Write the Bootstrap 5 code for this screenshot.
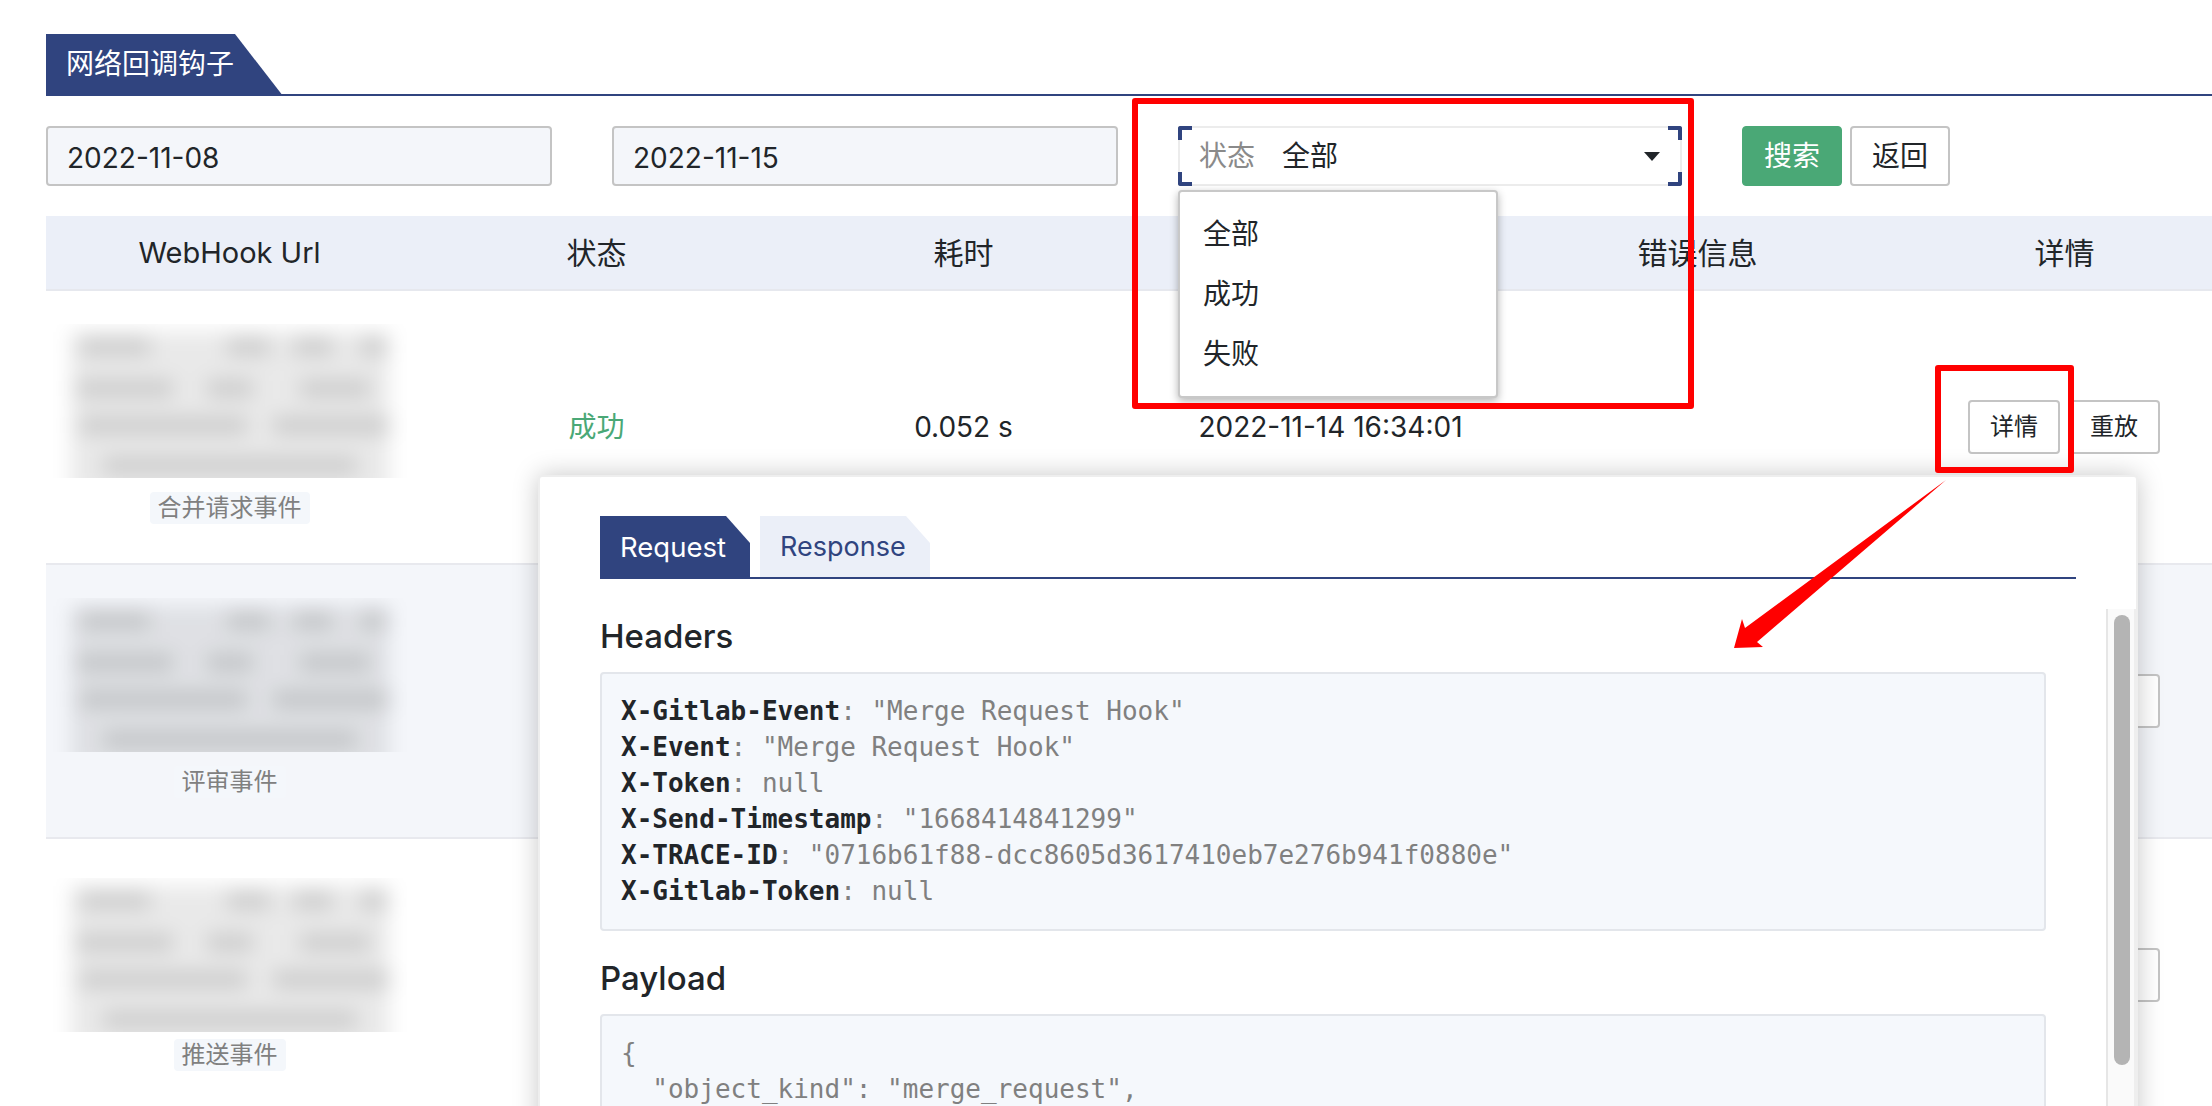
<!DOCTYPE html>
<html lang="zh">
<head>
<meta charset="utf-8">
<title>网络回调钩子</title>
<link rel="stylesheet" href="https://cdn.jsdelivr.net/npm/bootstrap@5.3.0/dist/css/bootstrap.min.css">
<style>
:root{--navy:#30447f;--ink:#212529;--line:#c4c4c4;--soft:#f4f6fa}
html,body{height:1106px;overflow:hidden;background:#fff}
body{font-family:Inter,"Noto Sans CJK SC",sans-serif;font-size:28px;line-height:40px;color:var(--ink)}
.stage{position:relative;height:1106px;overflow:hidden;padding:34px 0 0 46px}
.title-bar{border-bottom:2px solid var(--navy);height:62px}
.title-tab{display:inline-block;height:62px;width:237px;padding:10px 0 0 20px;background:var(--navy);color:#fff;line-height:40px;clip-path:polygon(0 0,189px 0,237px 100%,0 100%)}
.filter-row{margin-top:30px;height:60px;gap:60px}
.date-input.form-control{width:506px;height:60px;flex:none;padding:3px 20px 0 19px;background:var(--soft);border:2px solid var(--line);border-radius:4px;font-size:28px;color:var(--ink);box-shadow:none}
.status-select{position:relative;width:504px;height:60px;flex:none;border:2px solid #ececec;padding:0 20px 0 19px;gap:27px}
.status-label{color:#8a8a8a}
.corner{position:absolute;width:14px;height:14px;border:0 solid var(--navy)}
.c-tl{left:-2px;top:-2px;border-width:4px 0 0 4px;border-top-left-radius:3px}
.c-tr{right:-2px;top:-2px;border-width:4px 4px 0 0;border-top-right-radius:3px}
.c-bl{left:-2px;bottom:-2px;border-width:0 0 4px 4px;border-bottom-left-radius:3px}
.c-br{right:-2px;bottom:-2px;border-width:0 4px 4px 0;border-bottom-right-radius:3px}
.actions{gap:8px;margin-left:0}
.act-btn.btn{height:60px;width:100px;padding:0;font-size:28px;line-height:1;border-radius:4px}
.act-search.btn{background:#4aa876;border-color:#4aa876;color:#fff}
.act-back.btn{background:#fff;border:2px solid var(--line);color:var(--ink)}
.menu-pop{position:absolute;left:1178px;top:190px;width:320px;height:208px;background:#fff;border:2px solid #c8c8c8;border-radius:4px;padding:12px 0;box-shadow:0 3px 8px rgba(0,0,0,.3);z-index:3}
.menu-item{height:60px;line-height:60px;padding-left:23px}
.hook-table.table{table-layout:fixed;width:2202px;margin:30px 0 0;--bs-table-bg:transparent;--bs-table-color:var(--ink);text-align:center}
.hook-table thead th{height:74px;padding:0;font-weight:400;font-size:30px;background:#ebeff8;border-bottom:2px solid #e6e8ee;vertical-align:middle}
.th-latin{font-size:29px}
.hook-table tbody td{height:274px;padding:0;border-bottom:2px solid #e8e9ee;vertical-align:middle}
.hook-table tbody tr:nth-child(2) td{background:var(--soft)}
.hook-table tbody td.url-cell{vertical-align:top;padding:33px 0 0}
.blur-clip{width:354px;height:154px;margin:0 auto;overflow:hidden}
.blur-art{display:block;filter:blur(10px)}
.url-shift{margin-top:6px}
.event-tag{display:inline-block;margin-top:14px;height:32px;line-height:32px;padding:0 8px;font-size:24px;color:#808080;background:#f4f7fb;border-radius:4px}
.tag-near{margin-top:7px}
.ok-text{color:#4aa876}
.row-btn.btn{width:92px;height:54px;padding:0;font-size:24px;line-height:1;background:#fff;border:2px solid var(--line);border-radius:4px;color:var(--ink)}
.btn-pair{padding-right:1px}
.detail-pop{position:absolute;left:538px;top:475px;width:1600px;height:760px;background:#fff;border:2px solid #eee;border-radius:4px;box-shadow:0 0 26px rgba(0,0,0,.22);z-index:2}
.pop-tabs{margin:39px 60px 0;height:63px;border-bottom:2px solid var(--navy);gap:10px}
.pop-tab{height:61px;padding:0 0 0 20px;line-height:62px;font-size:27px;background:#ebeff8;color:var(--navy);clip-path:polygon(0 0,146px 0,170px 27px,170px 100%,0 100%);width:170px}
.pop-tab.on{background:var(--navy);color:#fff;height:63px;width:150px;font-size:27.5px;clip-path:polygon(0 0,126px 0,150px 27px,150px 100%,0 100%)}
.pop-body{margin-top:29px;height:640px}
.pop-scroll{flex:1 1 auto;min-width:0;padding:0 60px 0 60px}
.sec-title{font-size:33px;line-height:56px;margin:0 0 8px}
.sec-title.next{margin-top:19px}
.code-box{margin:0;padding:19px 19px 20px;background:#f5f8fc;border:2px solid #e3e6eb;border-radius:4px;font-family:"DejaVu Sans Mono",monospace;font-size:26px;line-height:36px;color:#808080;overflow:hidden}
.code-box b{color:var(--ink);font-weight:700}
.fake-bar{flex:none;width:30px;background:#fafafa;border-left:2px solid #e6e6e6;border-right:2px solid #eee;padding:6px 6px 0;margin-top:1px}
.fake-thumb{width:16px;height:450px;border-radius:8px;background:#b4b4b4}
.red-box{position:absolute;border:6px solid #f00;border-radius:3px;z-index:4}
.red-a{left:1132px;top:98px;width:562px;height:311px}
.red-b{left:1935px;top:365px;width:139px;height:108px}
.red-arrow{position:absolute;left:1725px;top:470px;z-index:5}
</style>
</head>
<body>
<svg width="0" height="0" class="position-absolute">
  <defs>
    <symbol id="blurred" viewBox="0 0 354 190">
      <rect x="18" y="8" width="318" height="176" fill="#000" opacity=".085"/>
      <g fill="#000" opacity=".13">
        <rect x="27" y="14" width="70" height="17"/><rect x="174" y="14" width="43" height="17"/><rect x="240" y="14" width="40" height="17"/><rect x="307" y="14" width="27" height="17"/>
        <rect x="24" y="56" width="96" height="17"/><rect x="154" y="56" width="46" height="17"/><rect x="247" y="56" width="70" height="17"/>
        <rect x="27" y="93" width="167" height="17"/><rect x="220" y="93" width="117" height="17"/>
        <rect x="50" y="133" width="254" height="17"/>
      </g>
    </symbol>
  </defs>
</svg>
<div class="stage">
  <div class="title-bar"><span class="title-tab">网络回调钩子</span></div>

  <div class="filter-row d-flex align-items-center">
    <input class="date-input form-control" type="text" value="2022-11-08">
    <input class="date-input form-control" type="text" value="2022-11-15">
    <div class="status-select d-flex align-items-center">
      <span class="corner c-tl"></span><span class="corner c-tr"></span><span class="corner c-bl"></span><span class="corner c-br"></span>
      <span class="status-label">状态</span>
      <span class="flex-grow-1">全部</span>
      <svg width="16" height="9" viewBox="0 0 16 9"><polygon points="0,0 16,0 8,9" fill="#212529"/></svg>
    </div>
    <div class="actions d-flex">
      <button type="button" class="act-btn act-search btn">搜索</button>
      <button type="button" class="act-btn act-back btn">返回</button>
    </div>
  </div>

  <table class="hook-table table">
    <thead><tr><th><span class="th-latin">WebHook Url</span></th><th>状态</th><th>耗时</th><th></th><th>错误信息</th><th>详情</th></tr></thead>
    <tbody>
      <tr>
        <td class="url-cell"><div class="blur-clip"><svg class="blur-art" width="354" height="190"><use href="#blurred"/></svg></div><span class="event-tag">合并请求事件</span></td>
        <td class="ok-text">成功</td><td>0.052 s</td><td>2022-11-14 16:34:01</td><td></td>
        <td><div class="btn-pair d-flex justify-content-center gap-2"><button type="button" class="row-btn btn">详情</button><button type="button" class="row-btn btn">重放</button></div></td>
      </tr>
      <tr>
        <td class="url-cell"><div class="blur-clip"><svg class="blur-art" width="354" height="190"><use href="#blurred"/></svg></div><span class="event-tag">评审事件</span></td>
        <td></td><td></td><td></td><td></td>
        <td><div class="btn-pair d-flex justify-content-center gap-2"><button type="button" class="row-btn btn" aria-label="详情"></button><button type="button" class="row-btn btn" aria-label="重放"></button></div></td>
      </tr>
      <tr>
        <td class="url-cell"><div class="blur-clip url-shift"><svg class="blur-art" width="354" height="190"><use href="#blurred"/></svg></div><span class="event-tag tag-near">推送事件</span></td>
        <td></td><td></td><td></td><td></td>
        <td><div class="btn-pair d-flex justify-content-center gap-2"><button type="button" class="row-btn btn" aria-label="详情"></button><button type="button" class="row-btn btn" aria-label="重放"></button></div></td>
      </tr>
    </tbody>
  </table>

  <div class="menu-pop">
    <div class="menu-item">全部</div>
    <div class="menu-item">成功</div>
    <div class="menu-item">失败</div>
  </div>

  <div class="detail-pop">
    <div class="pop-tabs d-flex align-items-start">
      <div class="pop-tab on">Request</div>
      <div class="pop-tab">Response</div>
    </div>
    <div class="pop-body d-flex">
      <div class="pop-scroll">
        <h5 class="sec-title">Headers</h5>
<pre class="code-box"><b>X-Gitlab-Event</b>: "Merge Request Hook"
<b>X-Event</b>: "Merge Request Hook"
<b>X-Token</b>: null
<b>X-Send-Timestamp</b>: "1668414841299"
<b>X-TRACE-ID</b>: "0716b61f88-dcc8605d3617410eb7e276b941f0880e"
<b>X-Gitlab-Token</b>: null</pre>
        <h5 class="sec-title next">Payload</h5>
<pre class="code-box">{
  "object_kind": "merge_request",</pre>
      </div>
      <div class="fake-bar"><div class="fake-thumb"></div></div>
    </div>
  </div>

  <div class="red-box red-a"></div>
  <div class="red-box red-b"></div>
  <svg class="red-arrow" width="230" height="190" viewBox="1725 470 230 190"><polygon points="1946,480 1745,628 1742,619 1734,648 1763,647 1757,642" fill="#f00"/></svg>
</div>
<script src="https://cdn.jsdelivr.net/npm/bootstrap@5.3.0/dist/js/bootstrap.bundle.min.js"></script>
</body>
</html>
